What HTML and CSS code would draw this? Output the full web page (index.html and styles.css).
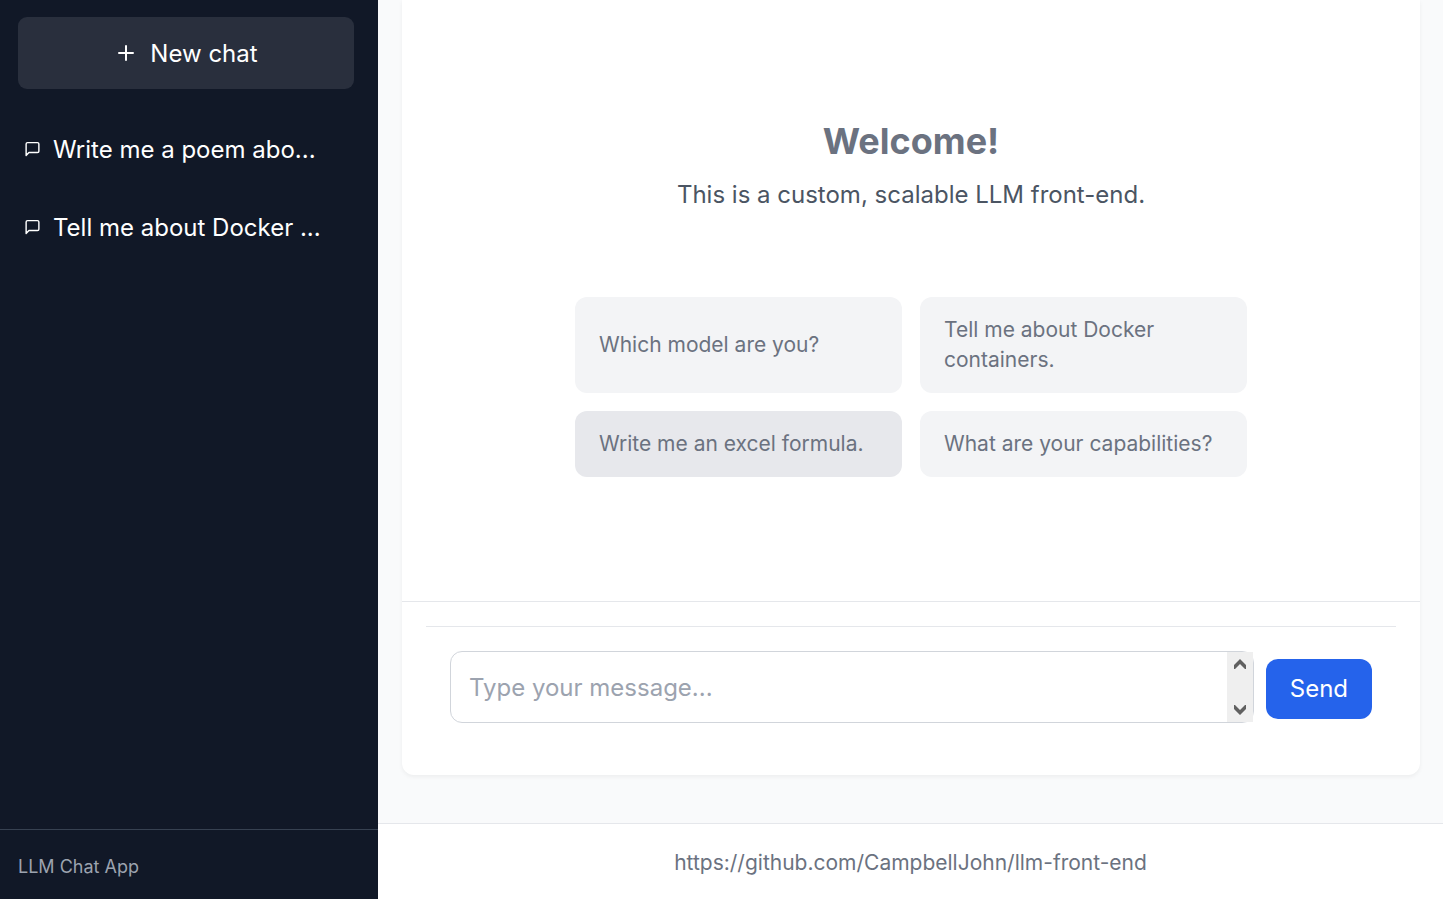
FILE: index.html
```html
<!DOCTYPE html>
<html lang="en">
<head>
<meta charset="utf-8">
<meta name="viewport" content="width=device-width, initial-scale=1">
<title>LLM Chat App</title>
<link rel="stylesheet" href="styles.css">
</head>
<body>
<div class="app">
  <aside class="sidebar">
    <button type="button" class="new-chat">
      <svg class="plus-icon" viewBox="0 0 24 24" aria-hidden="true"><path d="M12 5v14M5 12h14"/></svg>
      <span class="label">New chat</span>
    </button>
    <nav class="chats" aria-label="Chats">
      <button type="button" class="chat-link">
        <svg class="chat-icon" viewBox="0 0 24 24" aria-hidden="true"><path d="M21 15a2 2 0 0 1-2 2H7l-4 4V5a2 2 0 0 1 2-2h14a2 2 0 0 1 2 2z"/></svg>
        <span class="label">Write me a poem abo...</span>
      </button>
      <button type="button" class="chat-link">
        <svg class="chat-icon" viewBox="0 0 24 24" aria-hidden="true"><path d="M21 15a2 2 0 0 1-2 2H7l-4 4V5a2 2 0 0 1 2-2h14a2 2 0 0 1 2 2z"/></svg>
        <span class="label">Tell me about Docker ...</span>
      </button>
    </nav>
    <div class="sidebar-footer">LLM Chat App</div>
  </aside>
  <div class="content">
    <main class="card">
      <section class="welcome">
        <h1 class="title">Welcome!</h1>
        <p class="subtitle">This is a custom, scalable LLM front-end.</p>
        <div class="prompts">
          <button type="button" class="prompt">Which model are you?</button>
          <button type="button" class="prompt">Tell me about Docker containers.</button>
          <button type="button" class="prompt prompt-active">Write me an excel formula.</button>
          <button type="button" class="prompt">What are your capabilities?</button>
        </div>
      </section>
      <div class="composer">
        <form class="form">
          <div class="field">
            <textarea class="message" rows="1" aria-label="Message" placeholder="Type your message..."></textarea>
            <div class="scrollbar" aria-hidden="true">
              <svg class="arrow" viewBox="0 0 14 10"><path d="M1 10V6L7 0l6 6v4h-1L7 5l-5 5z"/></svg>
              <svg class="arrow" viewBox="0 0 14 10"><path d="M1 0v4l6 6 6-6V0h-1L7 5 2 0z"/></svg>
            </div>
          </div>
          <button type="button" class="send">Send</button>
        </form>
      </div>
    </main>
    <footer class="footer"><a class="repo" href="https://github.com/CampbellJohn/llm-front-end">https://github.com/CampbellJohn/llm-front-end</a></footer>
  </div>
</div>
</body>
</html>
```
FILE: styles.css
```css
* {
  box-sizing: border-box;
}

body {
  margin: 0;
  font-family: Inter, "Liberation Sans", sans-serif;
  font-size: 24px;
  line-height: 36px;
  color: #4b5563;
  background: #f9fafb;
}

button,
textarea {
  font: inherit;
}

button {
  border: 0;
  cursor: pointer;
}

.app {
  display: flex;
  min-height: 100vh;
}

.sidebar {
  display: flex;
  flex-direction: column;
  flex: 0 0 378px;
  background: #111827;
  color: #fff;
}

.new-chat {
  display: flex;
  align-items: center;
  justify-content: center;
  gap: 12px;
  margin: 17px 24px 24px 18px;
  padding: 17px 18px;
  border-radius: 9px;
  background: #292f3d;
  color: #fff;
}

.label {
  padding-top: 2px;
}

.plus-icon,
.chat-icon {
  fill: none;
  stroke: currentColor;
  stroke-width: 2;
  stroke-linecap: round;
  stroke-linejoin: round;
}

.plus-icon {
  width: 24px;
  height: 24px;
}

.chats {
  display: flex;
  flex-direction: column;
  gap: 6px;
  flex: 1;
  padding: 0 24px;
}

.chat-link {
  display: flex;
  align-items: center;
  gap: 12px;
  padding: 17px 0;
  background: none;
  color: #fff;
  text-align: left;
  white-space: nowrap;
}

.chat-icon {
  width: 17px;
  height: 18px;
}

.sidebar-footer {
  padding: 24px 18px 20px;
  border-top: 1px solid #374151;
  color: #9ca3af;
  font-size: 18px;
  line-height: 25px;
}

.content {
  display: flex;
  flex-direction: column;
  flex: 1;
  min-width: 0;
}

.card {
  display: flex;
  flex-direction: column;
  flex: 1;
  margin: 0 23px 48px 24px;
  border-radius: 0 0 12px 12px;
  background: #fff;
  box-shadow: 0 2px 4px rgba(0, 0, 0, 0.05);
}

.welcome {
  display: flex;
  flex-direction: column;
  align-items: center;
  justify-content: center;
  flex: 1;
  padding: 24px 24px 25px;
}

.title {
  margin: 0 0 18px;
  font-size: 36px;
  line-height: 36px;
  font-weight: 700;
  color: #6b7280;
}

.subtitle {
  margin: 0 0 84px;
}

.prompts {
  display: grid;
  grid-template-columns: 1fr 1fr;
  gap: 18px;
  width: 100%;
  max-width: 672px;
}

.prompt {
  padding: 18px 24px;
  border-radius: 12px;
  background: #f3f4f6;
  color: #6b7280;
  font-size: 21px;
  line-height: 30px;
  text-align: left;
}

.prompt-active {
  background: #e7e8ec;
}

.composer {
  padding: 24px;
  border-top: 1px solid #e5e7eb;
}

.form {
  display: flex;
  align-items: center;
  gap: 12px;
  padding: 24px;
  border-top: 1px solid #e5e7eb;
}

.field {
  position: relative;
  display: flex;
  flex: 1;
  padding-bottom: 4px;
}

.message {
  width: 100%;
  height: 72px;
  padding: 18px 18px 16px;
  border: 1px solid #d1d5db;
  border-radius: 12px;
  background: #fff;
  color: #111827;
  line-height: 36px;
  resize: none;
  overflow: hidden;
}

.message::placeholder {
  color: #9ca3af;
  opacity: 1;
}

.scrollbar {
  position: absolute;
  top: 1px;
  right: 1px;
  bottom: 5px;
  display: flex;
  flex-direction: column;
  align-items: center;
  justify-content: space-between;
  width: 26px;
  padding: 7px 0;
  background: #efefef;
}

.arrow {
  width: 14px;
  height: 10px;
  fill: #606060;
}

.send {
  padding: 12px 24px;
  border-radius: 12px;
  background: #2563eb;
  color: #fff;
}

.footer {
  padding: 24px 24px 21px;
  border-top: 1px solid #e5e7eb;
  background: #fff;
  font-size: 21px;
  line-height: 30px;
  text-align: center;
}

.repo {
  color: #6b7280;
  text-decoration: none;
}
```
